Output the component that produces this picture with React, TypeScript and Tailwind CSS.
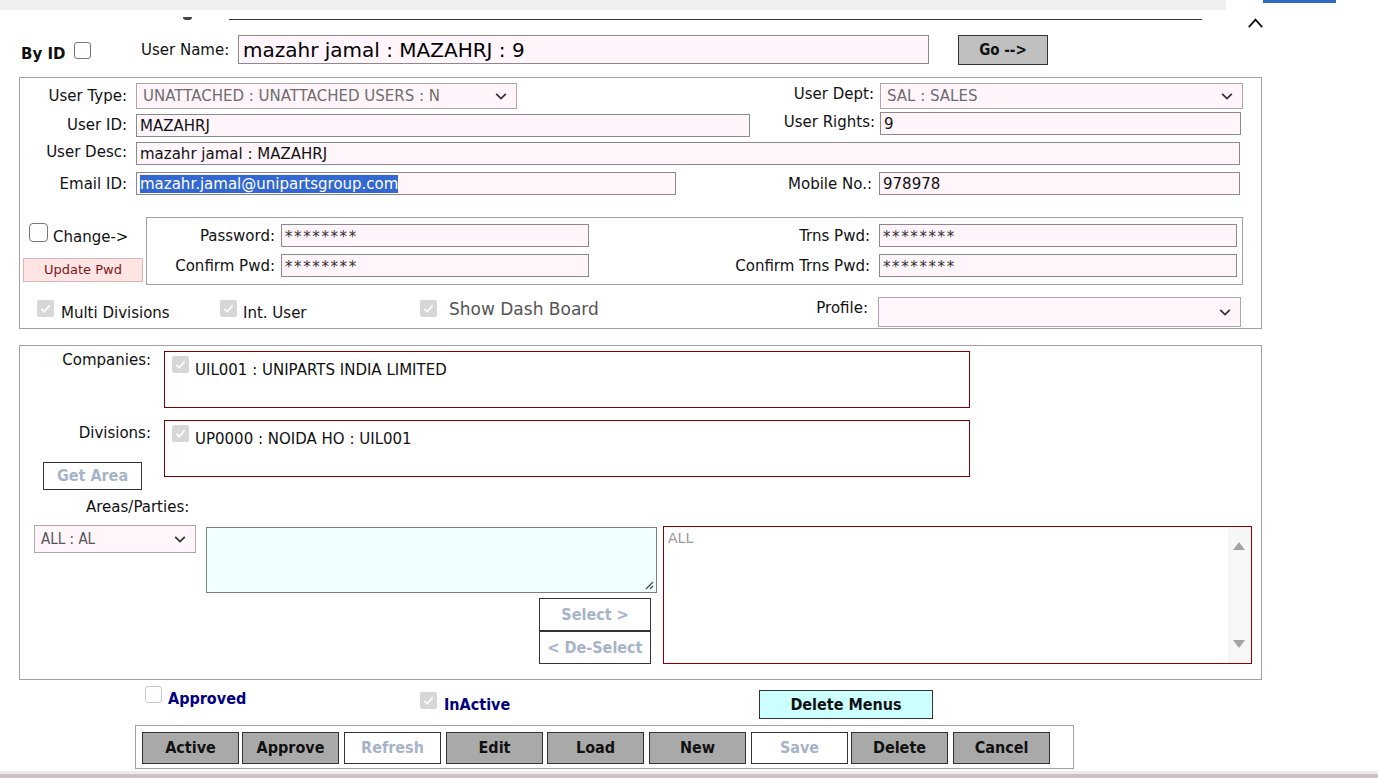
import React from "react";

const BF = "font-['DejaVu_Sans_Condensed','DejaVu_Sans',sans-serif] font-bold";

function Check({ checked = false, disabled = false, cls = "" }: { checked?: boolean; disabled?: boolean; cls?: string }) {
  if (checked)
    return (
      <div className={`w-[17px] h-[17px] rounded-[2px] bg-[#d7d7d7] flex items-center justify-center shrink-0 ${cls}`}>
        <svg viewBox="0 0 16 16" className="w-[13px] h-[13px]">
          <path d="M3 8.5 L6.5 12 L13 4" fill="none" stroke="#ffffff" strokeWidth="2.2" />
        </svg>
      </div>
    );
  return (
    <div
      className={`rounded-[3px] border bg-white shrink-0 ${disabled ? "border-[#c8c8c8]" : "border-[#767676]"} ${cls}`}
    />
  );
}

function Chev() {
  return (
    <svg viewBox="0 0 16 16" className="w-[14px] h-[14px] shrink-0">
      <path d="M2.5 5.5 L8 11 L13.5 5.5" fill="none" stroke="#333" strokeWidth="2" />
    </svg>
  );
}

function Sel({ cls, text = "", textCls = "" }: { cls: string; text?: string; textCls?: string }) {
  return (
    <div className={`border border-[#a9a9a9] bg-[#fff5fb] flex items-center justify-between pl-[6px] pr-[8px] shrink-0 ${cls}`}>
      <span className={`text-[#6e6e6e] whitespace-nowrap ${textCls}`}>{text}</span>
      <Chev />
    </div>
  );
}

function Inp({ cls, children }: { cls: string; children?: React.ReactNode }) {
  return (
    <div className={`border border-[#8a8a8a] bg-[#fff5fb] flex items-center pl-[3px] whitespace-nowrap overflow-hidden shrink-0 ${cls}`}>
      {children}
    </div>
  );
}

function Pwd({ cls }: { cls: string }) {
  return (
    <Inp cls={cls}>
      <span className="text-[15px] text-[#333] tracking-[1.6px] mt-[3px]">********</span>
    </Inp>
  );
}

function Btn({ label, cls = "", light = false }: { label: string; cls?: string; light?: boolean }) {
  return (
    <div
      className={`w-[97px] h-[32px] border border-[#333] flex items-center justify-center text-[16px] shrink-0 ${BF} ${
        light ? "bg-white text-[#a7b3c9]" : "bg-[#a9a9a9] text-[#111]"
      } ${cls}`}
    >
      {label}
    </div>
  );
}

export default function App() {
  return (
    <div className="w-[1378px] h-[778px] bg-white overflow-hidden font-['DejaVu_Sans',sans-serif] text-[15px] leading-[18px] text-[#111]">
      {/* top strip */}
      <div className="flex h-[10px]">
        <div className="w-[1226px] bg-[#f0f0f0]" />
        <div className="ml-[37px] w-[73px] h-[3px] bg-[#2f6cbf]" />
      </div>
      <div className="flex h-[25px] items-start">
        <div className="ml-[183px] mt-[7px] w-[9px] h-[3px] rounded-b-full bg-[#444]" />
        <div className="ml-[37px] mt-[9px] w-[973px] h-px bg-[#333]" />
        <svg viewBox="0 0 20 12" className="ml-[44px] mt-[8px] w-[19px] h-[10px]">
          <path d="M2 11 L10 2 L18 11" fill="none" stroke="#111" strokeWidth="2.2" />
        </svg>
      </div>

      {/* user name row */}
      <div className="flex items-start h-[30px]">
        <div className="ml-[21px] w-[52px] mt-[10px] font-bold text-[15px]">By ID</div>
        <Check cls="w-[17px] h-[17px] mt-[7px] ml-[1px]" />
        <div className="ml-[50px] w-[97px] mt-[6px] whitespace-nowrap">User Name:</div>
        <Inp cls="w-[691px] h-[29px] pl-[4px] text-[20px] text-black">mazahr jamal : MAZAHRJ : 9</Inp>
        <div className={`ml-[29px] w-[90px] h-[30px] bg-[#c0c0c0] border border-[#333] flex items-center justify-center text-[15px] ${BF}`}>
          Go --&gt;
        </div>
      </div>

      {/* section 1 */}
      <div className="ml-[19px] mt-[12px] w-[1243px] h-[252px] border border-[#a0a0a0]">
        <div className="flex items-center mt-[5px] h-[26px]">
          <div className="w-[116px] pr-[9px] text-right">User Type:</div>
          <Sel cls="w-[381px] h-[26px]" text="UNATTACHED : UNATTACHED USERS : N" />
          <div className="w-[363px] pr-[6px] text-right mb-[5px]">User Dept:</div>
          <Sel cls="w-[363px] h-[26px]" text="SAL : SALES" />
        </div>
        <div className="flex items-start mt-[3px] h-[25px]">
          <div className="w-[116px] pr-[9px] text-right mt-[4px]">User ID:</div>
          <Inp cls="w-[614px] h-[23px] mt-[2px]">MAZAHRJ</Inp>
          <div className="w-[130px] pr-[5px] text-right mt-[1px]">User Rights:</div>
          <Inp cls="w-[361px] h-[23px]">9</Inp>
        </div>
        <div className="flex items-start mt-[5px] h-[23px]">
          <div className="w-[116px] pr-[9px] text-right mt-px">User Desc:</div>
          <Inp cls="w-[1104px] h-[23px]">mazahr jamal : MAZAHRJ</Inp>
        </div>
        <div className="flex items-start mt-[7px] h-[23px]">
          <div className="w-[116px] pr-[9px] text-right mt-[3px]">Email ID:</div>
          <Inp cls="w-[540px] h-[23px]">
            <span className="bg-[#3367d1] text-white">mazahr.jamal@unipartsgroup.com</span>
          </Inp>
          <div className="w-[203px] pr-[7px] text-right mt-[3px]">Mobile No.:</div>
          <Inp cls="w-[361px] h-[23px]">978978</Inp>
        </div>

        {/* password block */}
        <div className="flex items-start mt-[22px]">
          <div className="w-[126px] h-[68px] flex flex-col">
            <div className="flex items-start h-[41px]">
              <Check cls="w-[19px] h-[19px] ml-[9px] mt-[6px] rounded-[4px]" />
              <div className="ml-[5px] mt-[11px] whitespace-nowrap">Change-&gt;</div>
            </div>
            <div className="ml-[3px] w-[120px] h-[24px] bg-[#ffe4e4] border border-[#dcb8b8] flex items-center justify-center text-[13px] text-[#7a1818]">
              Update Pwd
            </div>
          </div>
          <div className="w-[1097px] h-[68px] border border-[#a0a0a0]">
            <div className="flex items-center mt-[6px] h-[23px]">
              <div className="w-[134px] pr-[6px] text-right">Password:</div>
              <Pwd cls="w-[308px] h-[23px]" />
              <div className="w-[290px] pr-[9px] text-right">Trns Pwd:</div>
              <Pwd cls="w-[358px] h-[23px]" />
            </div>
            <div className="flex items-center mt-[7px] h-[23px]">
              <div className="w-[134px] pr-[6px] text-right">Confirm Pwd:</div>
              <Pwd cls="w-[308px] h-[23px]" />
              <div className="w-[290px] pr-[9px] text-right">Confirm Trns Pwd:</div>
              <Pwd cls="w-[358px] h-[23px]" />
            </div>
          </div>
        </div>

        {/* checkbox row */}
        <div className="flex items-start mt-[12px] h-[30px]">
          <div className="w-[200px] flex items-start">
            <Check checked cls="ml-[17px] mt-[3px]" />
            <div className="ml-[7px] mt-[7px] whitespace-nowrap">Multi Divisions</div>
          </div>
          <div className="w-[200px] flex items-start">
            <Check checked cls="mt-[3px]" />
            <div className="ml-[6px] mt-[7px] whitespace-nowrap">Int. User</div>
          </div>
          <div className="w-[330px] flex items-start">
            <Check checked cls="mt-[3px]" />
            <div className="ml-[12px] mt-[2px] text-[17px] leading-[20px] text-[#555] whitespace-nowrap">Show Dash Board</div>
          </div>
          <div className="w-[128px] pr-[10px] text-right mt-[2px]">Profile:</div>
          <Sel cls="w-[363px] h-[30px]" />
        </div>
      </div>

      {/* section 2 */}
      <div className="ml-[19px] mt-[16px] w-[1243px] h-[335px] border border-[#a0a0a0]">
        <div className="flex items-start mt-[5px]">
          <div className="w-[144px] pr-[13px] text-right">Companies:</div>
          <div className="w-[806px] h-[57px] border border-[#800000] flex items-start pl-[7px] pt-[4px]">
            <Check checked />
            <div className="ml-[6px] mt-[5px] whitespace-nowrap">UIL001 : UNIPARTS INDIA LIMITED</div>
          </div>
        </div>
        <div className="flex items-start mt-[12px]">
          <div className="w-[144px] flex flex-col">
            <div className="pr-[13px] text-right mt-[4px]">Divisions:</div>
            <div className={`ml-[23px] mt-[20px] w-[99px] h-[28px] border border-[#333] flex items-center justify-center text-[16px] text-[#a7b3c9] ${BF}`}>
              Get Area
            </div>
          </div>
          <div className="w-[806px] h-[57px] border border-[#800000] flex items-start pl-[7px] pt-[4px]">
            <Check checked />
            <div className="ml-[6px] mt-[5px] whitespace-nowrap">UP0000 : NOIDA HO : UIL001</div>
          </div>
        </div>
        <div className="ml-[66px] mt-[8px]">Areas/Parties:</div>
        <div className="flex items-start mt-[9px]">
          <Sel
            cls="ml-[14px] w-[162px] h-[28px]"
            text="ALL : AL"
            textCls="font-['DejaVu_Sans_Condensed','DejaVu_Sans',sans-serif] text-[15px] text-[#555]"
          />
          <div className="ml-[10px] w-[451px] flex flex-col">
            <div className="mt-[2px] h-[66px] w-full border border-[#808080] bg-[#f0ffff] relative">
              <svg viewBox="0 0 10 10" className="absolute right-[2px] bottom-[2px] w-[10px] h-[10px]">
                <path d="M9 2 L2 9 M9 6 L6 9" stroke="#444" strokeWidth="1.2" />
              </svg>
            </div>
            <div className="ml-[333px] mt-[5px] flex flex-col">
              <div className={`w-[112px] h-[33px] border border-[#333] flex items-center justify-center text-[16px] text-[#a7b3c9] ${BF}`}>
                Select &gt;
              </div>
              <div className={`w-[112px] h-[33px] border border-[#333] flex items-center justify-center text-[16px] text-[#a7b3c9] ${BF}`}>
                &lt; De-Select
              </div>
            </div>
          </div>
          <div className="ml-[6px] mt-[1px] w-[589px] h-[138px] border border-[#8b0000] flex">
            <div className="flex-1 pl-[4px] pt-[2px] text-[14px] text-[#999]">ALL</div>
            <div className="w-[23px] h-full bg-[#f7f7f7] flex flex-col items-center justify-between py-[14px] pr-[2px]">
              <svg viewBox="0 0 14 10" className="w-[14px] h-[10px]">
                <path d="M1 9 L7 1 L13 9 Z" fill="#a3a3a3" />
              </svg>
              <svg viewBox="0 0 14 10" className="w-[14px] h-[10px]">
                <path d="M1 1 L7 9 L13 1 Z" fill="#a3a3a3" />
              </svg>
            </div>
          </div>
        </div>
      </div>

      {/* approved row */}
      <div className="flex items-start mt-[6px] h-[33px]">
        <div className="ml-[145px] w-[275px] flex items-start">
          <Check disabled cls="w-[17px] h-[17px]" />
          <div className={`ml-[6px] mt-[4px] text-[16px] text-[#000080] ${BF}`}>Approved</div>
        </div>
        <div className="w-[339px] flex items-start">
          <Check checked cls="mt-[6px]" />
          <div className={`ml-[7px] mt-[10px] text-[16px] text-[#000080] ${BF}`}>InActive</div>
        </div>
        <div className={`mt-[4px] w-[174px] h-[29px] bg-[#ccffff] border border-[#333] flex items-center justify-center text-[16px] ${BF}`}>
          Delete Menus
        </div>
      </div>

      {/* button bar */}
      <div className="ml-[135px] mt-[6px] w-[939px] h-[44px] border border-[#a0a0a0] flex items-start pl-[6px] pt-[6px]">
        <Btn label="Active" />
        <Btn label="Approve" cls="ml-[3px]" />
        <Btn label="Refresh" light cls="ml-[5px]" />
        <Btn label="Edit" cls="ml-[5px]" />
        <Btn label="Load" cls="ml-[4px]" />
        <Btn label="New" cls="ml-[5px]" />
        <Btn label="Save" light cls="ml-[5px]" />
        <Btn label="Delete" cls="ml-[3px]" />
        <Btn label="Cancel" cls="ml-[5px]" />
      </div>
      <div className="mt-[2px] h-[3px] bg-[#ececec]" />
      <div className="h-[5px] bg-[#cdc3c3]" />
    </div>
  );
}
